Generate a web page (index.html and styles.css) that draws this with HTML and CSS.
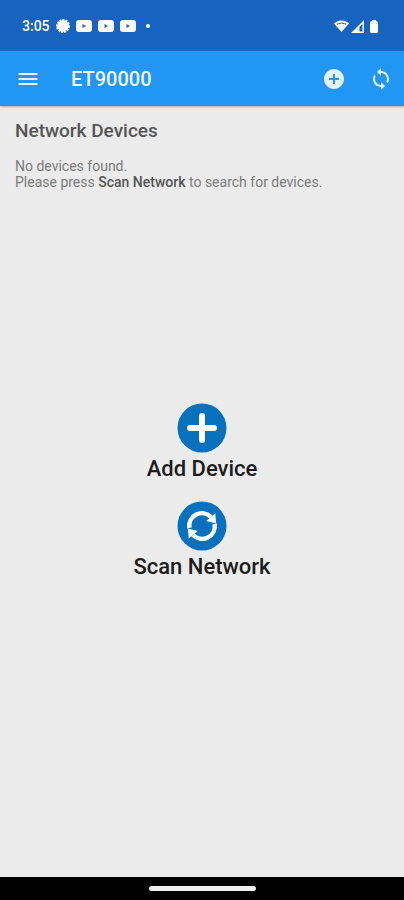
FILE: index.html
```html
<!DOCTYPE html>
<html lang="en">
<head>
<meta charset="utf-8">
<meta name="viewport" content="width=device-width, initial-scale=1">
<title>ET90000</title>
<link rel="stylesheet" href="styles.css">
</head>
<body>
<div class="status">
  <div class="status-group">
    <span class="clock">3:05</span>
    <svg class="gear" width="14" height="14" viewBox="0 0 14 14"><circle cx="7" cy="7" r="5.800"/><circle class="gear-teeth" cx="7" cy="7" r="6"/></svg>
    <svg class="video" width="16" height="12" viewBox="0 0 16 12"><rect width="16" height="12" rx="3"/><path d="M6.500 4v4L10 6z"/></svg>
    <svg class="video" width="16" height="12" viewBox="0 0 16 12"><rect width="16" height="12" rx="3"/><path d="M6.500 4v4L10 6z"/></svg>
    <svg class="video" width="16" height="12" viewBox="0 0 16 12"><rect width="16" height="12" rx="3"/><path d="M6.500 4v4L10 6z"/></svg>
    <span class="more"></span>
  </div>
  <div class="status-group signals">
    <svg width="15" height="12" viewBox="0 0 15 12"><path d="M0 3.500C4 -.5 11-.5 15 3.500L7.500 12z"/><path class="cut" d="M3 4.100Q7.500 2 12 4.100"/></svg>
    <svg width="13" height="13" viewBox="0 0 13 13"><path fill-rule="evenodd" d="M13 0v13H0zM11.500 3.800 8.500 6.800v4.700h3z"/></svg>
    <svg class="battery" width="8" height="13" viewBox="0 0 8 13"><path d="M2 0h4v1q2 0 2 2v8.500Q8 13 6.500 13h-5Q0 13 0 11.500V3q0-2 2-2z"/></svg>
  </div>
</div>
<header class="bar">
  <button class="icon-button" aria-label="Menu"><svg width="24" height="24" viewBox="0 0 24 24"><path d="M2.500 18h19v-2h-19zm0-5h19v-2h-19zm0-7v2h19V6z"/></svg></button>
  <h1 class="title">ET90000</h1>
  <button class="icon-button" aria-label="Add device"><svg width="24" height="24" viewBox="0 0 24 24"><path d="M12 2C6.480 2 2 6.480 2 12s4.480 10 10 10 10-4.480 10-10S17.520 2 12 2zm5 11h-4v4h-2v-4H7v-2h4V7h2v4h4v2z"/></svg></button>
  <button class="icon-button" aria-label="Scan network"><svg width="24" height="24" viewBox="0 0 24 24"><path d="M12 4V1L8 5l4 4V6c3.310 0 6 2.690 6 6 0 1.010-.25 1.970-.7 2.800l1.460 1.460C19.540 15.030 20 13.570 20 12c0-4.420-3.580-8-8-8zm0 14c-3.310 0-6-2.690-6-6 0-1.010.25-1.970.7-2.800L5.240 7.740C4.460 8.970 4 10.430 4 12c0 4.420 3.580 8 8 8v3l4-4-4-4v3z"/></svg></button>
</header>
<main class="content">
  <h2 class="heading">Network Devices</h2>
  <p class="note">No devices found.<br>Please press <b>Scan Network</b> to search for devices.</p>
  <div class="actions">
    <button class="action">
      <svg width="50" height="50" viewBox="0 0 50 50"><circle class="disc" cx="25" cy="25" r="24.500"/><path class="plus" d="M25 13v24M13 25h24"/></svg>
      Add Device
    </button>
    <button class="action">
      <svg width="50" height="50" viewBox="0 0 50 50"><circle class="disc" cx="25" cy="25" r="24.500"/><path class="arc" d="M12.400 27A12.700 12.700 0 0 1 34 16M37.600 23A12.700 12.700 0 0 1 16 34"/><path class="head" d="M38.200 12.500l1 10-10-2.500zM11.800 37.500l-1-10 10 2.500z"/></svg>
      Scan Network
    </button>
  </div>
</main>
<footer class="nav"><span class="pill"></span></footer>
</body>
</html>
```
FILE: styles.css
```css
* { box-sizing: border-box; }

body {
  margin: 0;
  min-height: 100vh;
  display: flex;
  flex-direction: column;
  background: #ebebeb;
  font-family: Roboto, "Liberation Sans", sans-serif;
}

button {
  border: 0;
  padding: 0;
  background: none;
  font: inherit;
  color: inherit;
  cursor: pointer;
}

svg { display: block; }

.status {
  display: flex;
  justify-content: space-between;
  align-items: center;
  height: 51px;
  padding: 1px 26px 0 22px;
  background: #1763c0;
  color: #fff;
  fill: #fff;
}

.status-group { display: flex; align-items: center; gap: 6px; }
.signals { gap: 2px; }
.clock { font-size: 14px; font-weight: 500; line-height: 16px; }
.gear-teeth { fill: none; stroke: #fff; stroke-width: 2; stroke-dasharray: 2 1; }
.video path { fill: #1763c0; }
.more { width: 4px; height: 4px; margin-left: 4px; border-radius: 50%; background: #fff; }
.cut { fill: none; stroke: #1763c0; }
.battery { margin-left: 4px; }

.bar {
  display: flex;
  align-items: center;
  height: 55px;
  padding: 1px 11px 0 16px;
  background: #2196f3;
  box-shadow: 0 1px 2px #9db4c8;
  color: #f2f9ff;
}

.title {
  flex: 1;
  margin: 0 0 0 31px;
  font-size: 20px;
  font-weight: 500;
  line-height: 24px;
}

.icon-button { fill: #e3f2ff; }
.icon-button + .icon-button { margin-left: 23px; }

.content {
  flex: 1;
  display: flex;
  flex-direction: column;
  padding: 15px 15px 0;
}

.heading {
  margin: 0;
  font-size: 19px;
  font-weight: 500;
  line-height: 20px;
  color: #555;
}

.note {
  margin: 17px 0 0;
  font-size: 14px;
  line-height: 16px;
  color: #7c7c7c;
}

.note b { font-weight: 500; color: #555; }

.actions {
  flex: 1;
  display: flex;
  flex-direction: column;
  justify-content: center;
  align-items: center;
  gap: 20px;
  padding-bottom: 86px;
}

.action {
  display: flex;
  flex-direction: column;
  align-items: center;
  gap: 4px;
  font-size: 22px;
  font-weight: 500;
  line-height: 24px;
  color: #1c1c1c;
}

.disc { fill: #0871bd; }
.plus { fill: none; stroke: #fff; stroke-width: 6; stroke-linecap: round; }
.arc { fill: none; stroke: #fff; stroke-width: 4.500; }
.head { fill: #fff; }

.nav {
  display: flex;
  justify-content: center;
  align-items: center;
  height: 23px;
  background: #000;
}

.pill { width: 107px; height: 5px; border-radius: 3px; background: #f0f0f0; }
```
